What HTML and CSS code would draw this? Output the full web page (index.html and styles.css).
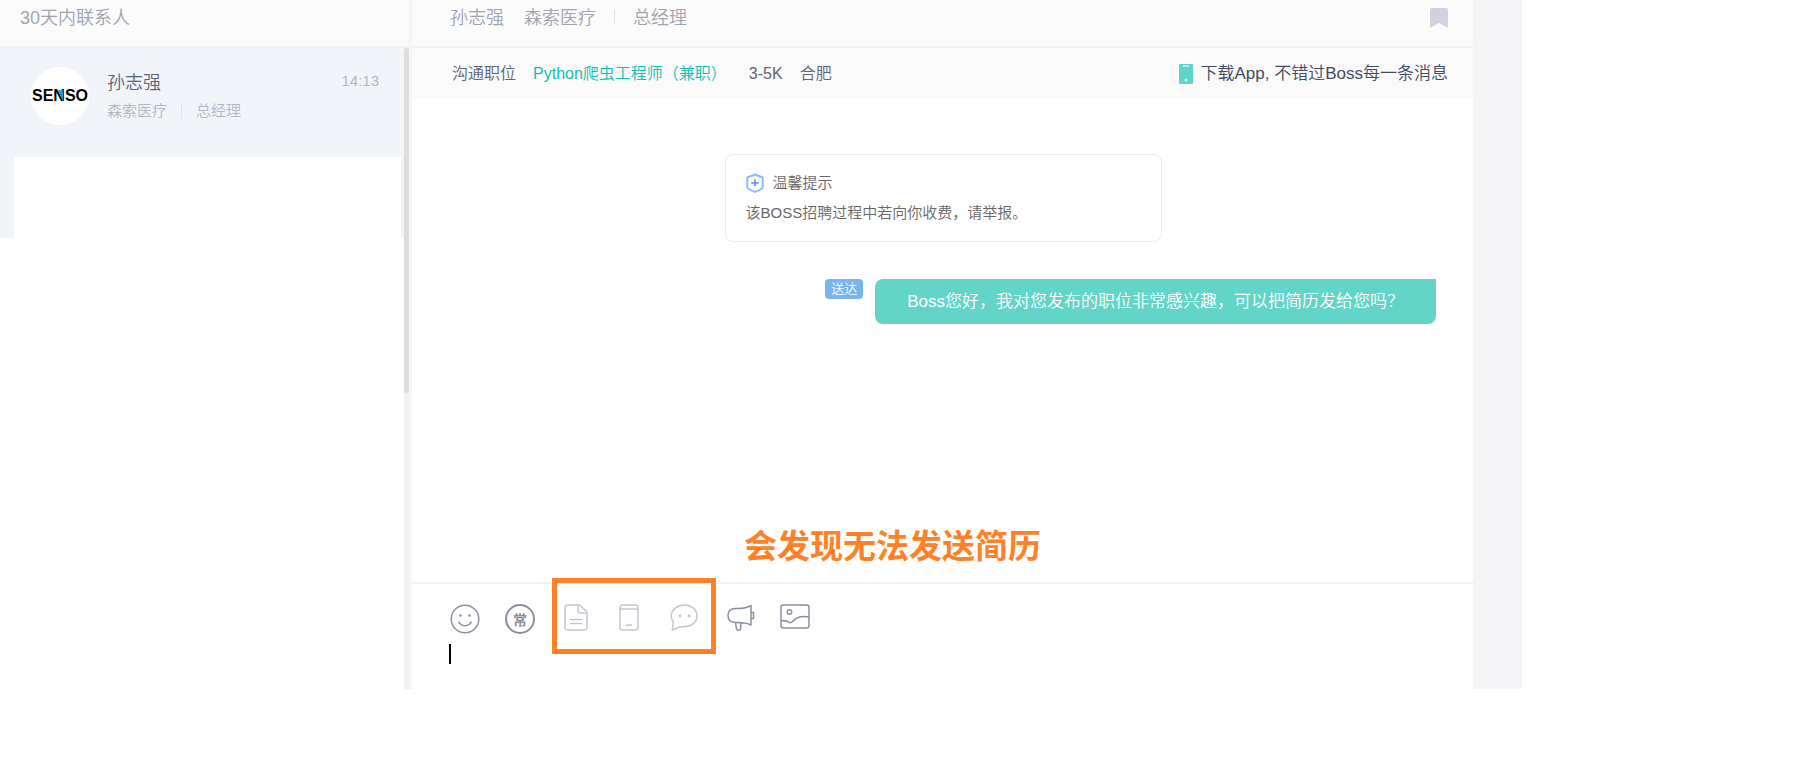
FILE: index.html
```html
<!DOCTYPE html>
<html lang="zh-CN">
<head>
<meta charset="utf-8">
<title>沟通</title>
<link rel="stylesheet" href="styles.css">
</head>
<body>
<div class="app">
  <aside class="sidebar">
    <header class="bar sidebar-title">30天内联系人</header>
    <div class="sidebar-body">
      <div class="contacts">
        <div class="contact-group">
          <div class="contact">
            <div class="avatar">
              <span class="avatar-text">SENSO</span>
              <svg class="avatar-mark" width="5" height="12" viewBox="0 0 6 15" aria-hidden="true"><path d="M0 0h6v15z" fill="#1ba0dc"/></svg>
            </div>
            <div class="contact-info">
              <div class="contact-name">孙志强</div>
              <div class="contact-sub"><span>森索医疗</span><i class="divider"></i><span>总经理</span></div>
            </div>
            <time class="contact-time">14:13</time>
          </div>
          <div class="contact-blank"></div>
        </div>
      </div>
      <div class="scroll-track"><div class="scroll-thumb"></div></div>
    </div>
  </aside>

  <main class="chat">
    <header class="bar chat-head">
      <span class="head-name">孙志强</span><span>森索医疗</span><i class="divider"></i><span>总经理</span>
      <button class="icon-btn bookmark" aria-label="收藏">
        <svg width="18" height="20" viewBox="0 0 18 20"><path d="M2 0h14a2 2 0 0 1 2 2v18l-9-5-9 5V2a2 2 0 0 1 2-2z" fill="#d0d3dc"/></svg>
      </button>
    </header>
    <div class="job-bar">
      <span>沟通职位</span>
      <a class="job-link" href="#">Python爬虫工程师（兼职）</a>
      <span class="salary">3-5K</span>
      <span>合肥</span>
      <a class="download" href="#">
        <svg width="14" height="20" viewBox="0 0 14 20" aria-hidden="true"><rect width="14" height="20" rx="1" fill="#5dd5c8"/><path d="M4 2h6" stroke="#d8f5f1" stroke-width="1.500"/><circle cx="7" cy="16" r="1.500" fill="#d8f5f1"/></svg>
        <span>下载App, 不错过Boss每一条消息</span>
      </a>
    </div>

    <section class="messages">
      <div class="notice">
        <div class="notice-title">
          <svg width="18" height="20" viewBox="0 0 18 20" fill="none" aria-hidden="true"><path d="M9 1.500 16.700 4.500v10c-1.500 2-4 3-7.700 4.200-3.700-1.200-6.200-2.200-7.700-4.200v-10z" stroke="#8fb9ff" stroke-width="2" stroke-linejoin="round"/><path d="M9 6.200v7.400M5.300 9.900h7.400" stroke="#6a9bf4" stroke-width="1.800"/></svg>
          <span>温馨提示</span>
        </div>
        <div>该BOSS招聘过程中若向你收费，请举报。</div>
      </div>
      <div class="message">
        <span class="status">送达</span>
        <p class="bubble">Boss您好，我对您发布的职位非常感兴趣，可以把简历发给您吗？</p>
      </div>
      <div class="annotation">会发现无法发送简历</div>
    </section>

    <section class="editor">
      <div class="toolbar">
        <button class="icon-btn" aria-label="表情">
          <svg width="30" height="30" viewBox="0 0 30 30"><circle cx="15" cy="15" r="13.800"/><path d="M8.500 17.500c2.500 5.500 10.500 5.500 13 0"/><circle class="dot" cx="10.500" cy="11.500" r="1.300"/><circle class="dot" cx="19.500" cy="11.500" r="1.300"/></svg>
        </button>
        <button class="icon-btn phrase">常</button>
        <div class="blocked">
          <button class="icon-btn" aria-label="发简历" disabled>
            <svg width="24" height="27" viewBox="0 0 24 27"><path d="M3.500 1h12L23 8v15.500a2.500 2.500 0 0 1-2.500 2.500h-17A2.500 2.500 0 0 1 1 23.500v-20A2.500 2.500 0 0 1 3.500 1zM14 1v5.500A2.500 2.500 0 0 0 16.500 9H22M6 15.500h12.500M6 19.500h12.500"/></svg>
          </button>
          <button class="icon-btn" aria-label="换电话" disabled>
            <svg width="20" height="27" viewBox="0 0 20 27"><rect x="1" y="1" width="18" height="25" rx="2.500"/><path d="M1 5h18M7 21h6"/></svg>
          </button>
          <button class="icon-btn" aria-label="换微信" disabled>
            <svg width="28" height="27" viewBox="0 0 28 27"><path d="M14.500 1C21.500 1 27 5.800 27 12s-5.500 10.500-12.500 10.500c-3.500 0-6 .5-8 1.700L2.200 26l1.300-8C2 16.200 1.200 14.500 1.200 12 1.200 5.800 7.500 1 14.500 1z"/><circle class="dot" cx="10" cy="12" r="1.400"/><circle class="dot" cx="19" cy="12" r="1.400"/></svg>
          </button>
        </div>
        <button class="icon-btn" aria-label="举报">
          <svg width="28" height="27" viewBox="0 0 28 27"><path d="M24 1.500c-4 2.500-8 3-13.500 3h-2C4 4.500 1 7 1 11.500s3 7 7.500 7h2c5.500 0 9.500.5 13.500 2.500zM24 8.500h2.500v6H24M8.500 18.500l1 6.500c.5 1.500 4 1.500 4.200 0v-6"/></svg>
        </button>
        <button class="icon-btn" aria-label="图片">
          <svg width="30" height="25" viewBox="0 0 30 25"><rect x="1" y="1" width="28" height="23" rx="2.500"/><circle cx="9.500" cy="8" r="2.200"/><path d="M1 17c4-1 6 0 7.500 1.200 1.700 1 3 .8 4-.8 4-4.500 9-5.900 16.500-4.400"/></svg>
        </button>
      </div>
      <div class="input-row">
        <i class="caret"></i>
        <textarea class="input" aria-label="消息" rows="1"></textarea>
      </div>
    </section>
  </main>
</div>
</body>
</html>
```
FILE: styles.css
```css
* {
  box-sizing: border-box;
}

body {
  margin: 0;
  background: #fff;
  font-family: "Liberation Sans", "Noto Sans CJK SC", sans-serif;
  font-weight: 350;
  font-size: 16px;
  line-height: 24px;
  color: #5d6377;
}

a {
  color: inherit;
  text-decoration: none;
}

svg {
  display: block;
}

.app {
  display: flex;
  margin-right: 287px;
  padding-right: 49px;
  background: linear-gradient(#f5f5f8, #f5f5f8) right / 49px 100% no-repeat;
}

.bar {
  height: 48px;
  padding-bottom: 11px;
  display: flex;
  align-items: center;
  background: #fbfbfb;
  border-bottom: 2px solid #f1f1f1;
  font-size: 18px;
  color: #9fa3b0;
}

.divider {
  width: 1px;
  height: 15px;
  background: #dfe1e7;
}

/* Contact list */
.sidebar {
  width: 412px;
  flex: none;
  display: flex;
  flex-direction: column;
  border-right: 3px solid #f6f6f6;
}

.sidebar-title {
  padding-left: 20px;
}

.sidebar-body {
  flex: 1;
  display: flex;
}

.contacts {
  flex: 1;
}

.contact-group {
  background: #f1f5fa;
  padding: 0 3px 0 14px;
}

.contact {
  display: flex;
  align-items: flex-start;
  height: 109px;
  padding: 19px 22px 0 17px;
}

.avatar {
  position: relative;
  width: 58px;
  height: 58px;
  border-radius: 50%;
  background: #fff;
  display: flex;
  align-items: center;
  justify-content: center;
}

.avatar-text {
  font-weight: bold;
  font-size: 16px;
  color: #000;
}

.avatar-mark {
  position: absolute;
  left: 27px;
  top: 23px;
}

.contact-info {
  flex: 1;
  padding: 4px 0 0 18px;
}

.contact-name {
  font-size: 18px;
}

.contact-sub {
  display: flex;
  align-items: center;
  gap: 14px;
  margin-top: 4px;
  font-size: 15px;
  color: #b1b5c1;
}

.contact-time {
  padding-top: 2px;
  font-size: 15px;
  color: #b1b5c1;
}

.contact-blank {
  height: 81px;
  background: #fff;
}

.scroll-track {
  width: 5px;
  background: #f1f1f1;
}

.scroll-thumb {
  height: 345px;
  border-radius: 3px;
  background: #dcdcdc;
}

/* Conversation */
.chat {
  flex: 1;
  min-width: 0;
  background: #fff;
}

.chat-head {
  padding-left: 38px;
  padding-right: 25px;
  gap: 18px;
}

.head-name {
  margin-right: 2px;
}

.icon-btn {
  padding: 0;
  border: 0;
  background: none;
  color: #8b90a1;
}

.icon-btn svg {
  fill: none;
  stroke: currentColor;
  stroke-width: 1.5;
  stroke-linejoin: round;
}

.icon-btn .dot {
  fill: currentColor;
  stroke: none;
}

.icon-btn:disabled {
  color: #c3c6cf;
}

.bookmark {
  margin-left: auto;
}

.bookmark svg {
  stroke: none;
}

.job-bar {
  display: flex;
  align-items: center;
  gap: 17px;
  height: 50px;
  padding: 2px 25px 0 40px;
  background: #fafafa;
}

.job-link {
  color: #12bfb0;
}

.salary {
  margin-left: 5px;
}

.download {
  display: flex;
  align-items: center;
  gap: 8px;
  margin-left: auto;
  font-size: 17px;
  color: #414a60;
}

.messages {
  position: relative;
  min-height: 484px;
  padding: 56px 37px 0 38px;
}

.notice {
  width: 437px;
  margin: 0 auto;
  padding: 16px 20px;
  border: 1px solid #ebebeb;
  border-radius: 8px;
  font-size: 15px;
  color: #666;
}

.notice-title {
  display: flex;
  align-items: center;
  gap: 9px;
  margin-bottom: 6px;
}

.message {
  display: flex;
  justify-content: flex-end;
  align-items: flex-start;
  gap: 12px;
  margin-top: 37px;
}

.status {
  padding: 0 6px;
  border-radius: 4px;
  background: #77b4f0;
  font-size: 13px;
  line-height: 20px;
  color: #fff;
}

.bubble {
  margin: 0;
  padding: 10px 32px;
  border-radius: 8px 0 8px 8px;
  background: #62d5c8;
  font-size: 17px;
  line-height: 25px;
  color: #fff;
}

.annotation {
  position: absolute;
  left: 332px;
  bottom: 13px;
  font-size: 33px;
  font-weight: bold;
  line-height: 44px;
  color: #ff8127;
}

.editor {
  height: 107px;
  padding: 20px 37px 0;
  border-top: 2px solid #f1f1f1;
}

.toolbar {
  position: relative;
  display: flex;
  align-items: flex-start;
  gap: 25px;
  padding-left: 1px;
}

.phrase {
  width: 30px;
  height: 30px;
  border: 2px solid #8b90a1;
  border-radius: 50%;
  font-family: "Noto Sans CJK SC", sans-serif;
  font-size: 14px;
  line-height: 24px;
  font-weight: bold;
}

.blocked {
  position: relative;
  display: flex;
  gap: 31px;
  margin: 0 4px;
}

.blocked::after {
  content: "";
  position: absolute;
  inset: -26px -18px -23px -12px;
  border: 5px solid #ff8127;
}

.input-row {
  display: flex;
  margin-top: 10px;
}

.caret {
  width: 2px;
  height: 20px;
  background: #000;
}

.input {
  flex: 1;
  height: 24px;
  padding: 0;
  border: 0;
  outline: 0;
  resize: none;
  background: none;
  font: inherit;
}
```
